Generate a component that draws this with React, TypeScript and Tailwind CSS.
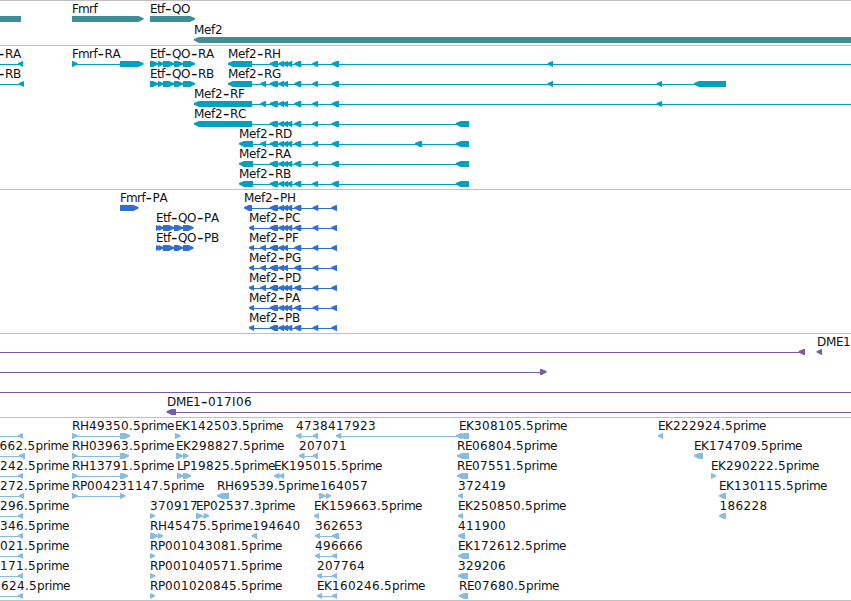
import React from 'react';

type Strand = 'left' | 'right';
type Span = [number, number];

interface Feature {
  row: number;
  dir: Strand;
  spans: Span[];
  label?: string;
  labelX?: number;
  // visible extent of the connecting line, if it is not the extent of the spans
  line?: Span;
}

interface TrackData {
  id: string;
  height: number;
  pitch: number;
  color: string;
  features: Feature[];
}

const VIEW_WIDTH = 851;
const BAR_HEIGHT = 6;
const FIRST_BAR = 15;
const HEAD = 5;

// advances of the label font, in pixels
const ADVANCE: Record<string, number> = {
  M: 10, D: 9, H: 9, Q: 9, G: 9, O: 10, E: 7, P: 7, F: 6, L: 6, I: 4,
  m: 11, e: 7, p: 7.4, r: 4.5, i: 3.2, f: 4, t: 4, '.': 4, '-': 7,
};

const glyphPositions = (text: string, start: number) => {
  let x = start;
  return [...text].map((ch) => {
    const at = x;
    x += ADVANCE[ch] ?? 8;
    return at;
  });
};

const UTR: Span = [228, 252];
const LONG_UTR: Span = [194, 252];
const SHORT_UTR: Span = [239, 253];
const FIRST_EXON: Span = [455.7, 469];
const ALT: Span = [260.3, 266];
const CORE: Span[] = [[269.7, 278], [278.3, 284], [282.5, 288]];
const EXTRA: Span = [286.5, 292.3];
const TAIL: Span[] = [[294.3, 301.3], [312.3, 318], [331.7, 339]];
const CDS_TAIL: Span[] = [[294.3, 301.3], [312.6, 318.3], [331.3, 337]];
const CDS_END: Span = [249, 254];

const ETF_EXONS: Span[] = [[150, 158], [158, 163.5], [163, 174], [174, 183], [183, 195]];
const ETF_CDS: Span[] = [[156, 160.5], [158.5, 163.5], [163, 174], [174, 183], [183, 193.5]];

const tracks: TrackData[] = [
  {
    id: 'genes',
    height: 44,
    pitch: 21,
    color: '#408e95',
    features: [
      { row: 0, dir: 'left', spans: [[-20, 21]] },
      { row: 0, dir: 'right', spans: [[72, 143.5]], label: 'Fmrf' },
      { row: 0, dir: 'right', spans: [[150, 195]], label: 'Etf-QO' },
      { row: 1, dir: 'left', spans: [[194, 900]], label: 'Mef2' },
    ],
  },
  {
    id: 'transcripts',
    height: 143,
    pitch: 20,
    color: '#00a0c0',
    features: [
      { row: 0, dir: 'left', spans: [[18, 23]], line: [0, 23], label: '-RA', labelX: -2 },
      { row: 1, dir: 'left', spans: [[19, 24]], line: [0, 24], label: '-RB', labelX: -2 },
      { row: 0, dir: 'right', spans: [[72, 77.5], [120, 143.5]], label: 'Fmrf-RA' },
      { row: 0, dir: 'right', spans: ETF_EXONS, label: 'Etf-QO-RA' },
      { row: 1, dir: 'right', spans: ETF_EXONS, label: 'Etf-QO-RB' },
      { row: 0, dir: 'left', spans: [UTR, ...CORE, EXTRA, ...TAIL, [547.7, 553]], line: [228, 851], label: 'Mef2-RH' },
      { row: 1, dir: 'left', spans: [UTR, ALT, ...CORE, ...TAIL, [547.7, 553], [656.7, 662], [694, 726]], label: 'Mef2-RG' },
      { row: 2, dir: 'left', spans: [LONG_UTR, ALT, ...CORE, ...TAIL, [656.7, 662]], line: [194, 851], label: 'Mef2-RF' },
      { row: 3, dir: 'left', spans: [LONG_UTR, ...CORE, EXTRA, ...TAIL, FIRST_EXON], label: 'Mef2-RC' },
      { row: 4, dir: 'left', spans: [SHORT_UTR, ALT, ...CORE, EXTRA, ...TAIL, [415, 422], FIRST_EXON], label: 'Mef2-RD' },
      { row: 5, dir: 'left', spans: [SHORT_UTR, ...CORE, EXTRA, ...TAIL, FIRST_EXON], label: 'Mef2-RA' },
      { row: 6, dir: 'left', spans: [SHORT_UTR, ...CORE, EXTRA, ...TAIL, FIRST_EXON], label: 'Mef2-RB' },
    ],
  },
  {
    id: 'proteins',
    height: 143,
    pitch: 20,
    color: '#306ecf',
    features: [
      { row: 0, dir: 'right', spans: [[120, 138.5]], label: 'Fmrf-PA' },
      { row: 1, dir: 'right', spans: ETF_CDS, label: 'Etf-QO-PA' },
      { row: 2, dir: 'right', spans: ETF_CDS, label: 'Etf-QO-PB' },
      { row: 0, dir: 'left', spans: [[244, 252], ...CORE, EXTRA, ...CDS_TAIL], label: 'Mef2-PH' },
      { row: 1, dir: 'left', spans: [CDS_END, ...CORE, EXTRA, ...CDS_TAIL], label: 'Mef2-PC' },
      { row: 2, dir: 'left', spans: [CDS_END, ALT, ...CORE, ...CDS_TAIL], label: 'Mef2-PF' },
      { row: 3, dir: 'left', spans: [CDS_END, ALT, ...CORE, ...CDS_TAIL], label: 'Mef2-PG' },
      { row: 4, dir: 'left', spans: [CDS_END, ALT, ...CORE, EXTRA, ...CDS_TAIL], label: 'Mef2-PD' },
      { row: 5, dir: 'left', spans: [CDS_END, ...CORE, EXTRA, ...CDS_TAIL], label: 'Mef2-PA' },
      { row: 6, dir: 'left', spans: [CDS_END, ...CORE, EXTRA, ...CDS_TAIL], label: 'Mef2-PB' },
    ],
  },
  {
    id: 'clones',
    height: 83,
    pitch: 20,
    color: '#7859aa',
    features: [
      { row: 0, dir: 'left', spans: [[798.7, 805]], line: [0, 805] },
      { row: 0, dir: 'left', spans: [[816.7, 822]], label: 'DME1' },
      { row: 1, dir: 'right', spans: [[540, 546.5]], line: [0, 546] },
      { row: 2, dir: 'left', spans: [], line: [0, 851] },
      { row: 3, dir: 'left', spans: [[166.7, 176]], line: [167, 851], label: 'DME1-017I06' },
    ],
  },
  {
    id: 'ests',
    height: 182,
    pitch: 20,
    color: '#88bbdd',
    features: [
      { row: 0, dir: 'left', spans: [[18, 23]], line: [0, 23] },
      { row: 1, dir: 'left', spans: [[19, 25]], line: [0, 25], label: '662.5prime', labelX: -0.5 },
      { row: 2, dir: 'left', spans: [[18, 23]], line: [0, 23], label: '242.5prime', labelX: 0 },
      { row: 3, dir: 'left', spans: [[19, 24]], line: [0, 24], label: '272.5prime', labelX: 0 },
      { row: 4, dir: 'left', spans: [[18, 23]], line: [0, 23], label: '296.5prime', labelX: 0 },
      { row: 5, dir: 'left', spans: [[18, 23]], line: [0, 23], label: '346.5prime', labelX: 0 },
      { row: 6, dir: 'left', spans: [[18, 23]], line: [0, 23], label: '021.5prime', labelX: 0 },
      { row: 7, dir: 'left', spans: [[18, 23]], line: [0, 23], label: '171.5prime', labelX: 0 },
      { row: 8, dir: 'left', spans: [[18, 23]], line: [0, 23], label: '624.5prime', labelX: 1 },

      { row: 0, dir: 'right', spans: [[72, 77.5], [120, 130]], label: 'RH49350.5prime' },
      { row: 1, dir: 'right', spans: [[72, 77.5], [120, 129]], label: 'RH03963.5prime' },
      { row: 2, dir: 'right', spans: [[72, 77.5], [120, 128]], label: 'RH13791.5prime' },
      { row: 3, dir: 'right', spans: [[72, 77.5], [120, 125.5]], label: 'RP004231147.5prime' },

      { row: 0, dir: 'right', spans: [[175, 180.5]], label: 'EK142503.5prime' },
      { row: 1, dir: 'right', spans: [[176, 183], [183, 188.5]], label: 'EK298827.5prime' },
      { row: 2, dir: 'right', spans: [[177, 183], [183, 191]], label: 'LP19825.5prime' },
      { row: 3, dir: 'left', spans: [[217, 229]], label: 'RH69539.5prime' },
      { row: 4, dir: 'right', spans: [[150, 155]], label: '370917' },
      { row: 4, dir: 'right', spans: [[196, 202.5], [203.7, 209]], label: 'EP02537.3prime' },
      { row: 5, dir: 'right', spans: [[150, 158], [158, 163]], label: 'RH45475.5prime' },
      { row: 5, dir: 'left', spans: [[251.7, 257]], label: '194640', labelX: 252.5 },
      { row: 6, dir: 'right', spans: [[150, 155]], label: 'RP001043081.5prime' },
      { row: 7, dir: 'right', spans: [[150, 155]], label: 'RP001040571.5prime' },
      { row: 8, dir: 'right', spans: [[150, 155]], label: 'RP001020845.5prime' },

      { row: 0, dir: 'left', spans: [[296, 301.5], [312.7, 318]], label: '47384' },
      { row: 0, dir: 'left', spans: [[336, 341.3], [456, 462]], label: '17923' },
      { row: 1, dir: 'left', spans: [[299, 304.5], [312.7, 318]], label: '207071' },
      { row: 2, dir: 'left', spans: [[274, 279.3], [279, 284.3]], label: 'EK195015.5prime' },
      { row: 3, dir: 'right', spans: [[319, 325.5], [326, 331]], label: '164057', labelX: 320 },
      { row: 4, dir: 'left', spans: [[314, 319]], label: 'EK159663.5prime' },
      { row: 5, dir: 'left', spans: [[315, 320], [332, 339]], label: '362653' },
      { row: 6, dir: 'left', spans: [[315, 320], [332, 337]], label: '496666' },
      { row: 7, dir: 'left', spans: [[317, 322], [332, 337]], label: '207764' },
      { row: 8, dir: 'left', spans: [[317, 322], [332, 337]], label: 'EK160246.5prime' },

      { row: 0, dir: 'left', spans: [[459, 469]], label: 'EK308105.5prime' },
      { row: 1, dir: 'left', spans: [[457, 469]], label: 'RE06804.5prime' },
      { row: 2, dir: 'left', spans: [[457, 468]], label: 'RE07551.5prime' },
      { row: 3, dir: 'left', spans: [[458, 463]], label: '372419' },
      { row: 4, dir: 'left', spans: [[458, 463]], label: 'EK250850.5prime' },
      { row: 5, dir: 'left', spans: [[458, 465]], label: '411900' },
      { row: 6, dir: 'left', spans: [[458, 469]], label: 'EK172612.5prime' },
      { row: 7, dir: 'left', spans: [[458, 468]], label: '329206' },
      { row: 8, dir: 'left', spans: [[459, 468]], label: 'RE07680.5prime' },

      { row: 0, dir: 'left', spans: [[658, 663]], label: 'EK222924.5prime' },
      { row: 1, dir: 'left', spans: [[694, 703]], label: 'EK174709.5prime' },
      { row: 2, dir: 'right', spans: [[711, 716]], label: 'EK290222.5prime' },
      { row: 3, dir: 'left', spans: [[719, 726]], label: 'EK130115.5prime' },
      { row: 4, dir: 'left', spans: [[719, 726]], label: '186228', labelX: 719.5 },
    ],
  },
];

const arrowPoints = ([start, end]: Span, dir: Strand, y: number) => {
  const head = Math.min(HEAD, end - start);
  const bottom = y + BAR_HEIGHT;
  const [tip, neck, tail] = dir === 'left' ? [start, start + head, end] : [end, end - head, start];
  // the tip is blunt, two pixels high
  return `${tip},${y + 2} ${neck},${y} ${tail},${y} ${tail},${bottom} ${neck},${bottom} ${tip},${y + 3.6}`;
};

const Label: React.FC<{ text: string; x: number; y: number }> = ({ text, x, y }) => {
  const xs = glyphPositions(text, x);
  return (
    <text x={xs.join(' ')} y={y} className="fill-[#111] text-[12px]">
      {text.split(/(-)/).filter(Boolean).map((part, i) =>
        part === '-' ? (
          <tspan key={i} dy={1} className="text-[18px]">-</tspan>
        ) : (
          <tspan key={i} dy={i > 0 ? -1 : 0}>{part}</tspan>
        ),
      )}
    </text>
  );
};

const FeatureGlyph: React.FC<{ feature: Feature; pitch: number }> = ({ feature, pitch }) => {
  const { row, dir, spans, label, labelX, line } = feature;
  const y = FIRST_BAR + row * pitch;
  const from = line ? line[0] : Math.round(spans[0][0] + 1);
  const to = line ? line[1] : Math.round(spans[spans.length - 1][1] - 1);
  const hasLine = line !== undefined || spans.length > 1;

  return (
    <g>
      {hasLine && <rect x={from} y={y + 3} width={to - from} height={1} />}
      {spans.map((span) => (
        <polygon key={span[0]} points={arrowPoints(span, dir, y)} />
      ))}
      {label && <Label text={label} x={labelX ?? Math.round(spans[0][0])} y={y - 3} />}
    </g>
  );
};

const Track: React.FC<{ track: TrackData }> = ({ track }) => (
  <section className="border-t border-[#c0c0c0]">
    <svg
      className="block"
      width={VIEW_WIDTH}
      height={track.height}
      fill={track.color}
    >
      {track.features.map((feature, i) => (
        <FeatureGlyph key={i} feature={feature} pitch={track.pitch} />
      ))}
    </svg>
  </section>
);

export default function App() {
  return (
    <main className="flex h-[601px] w-[851px] flex-col overflow-hidden border-b border-[#c0c0c0] bg-white font-['DejaVu_Sans',sans-serif]">
      {tracks.map((track) => (
        <Track key={track.id} track={track} />
      ))}
    </main>
  );
}
